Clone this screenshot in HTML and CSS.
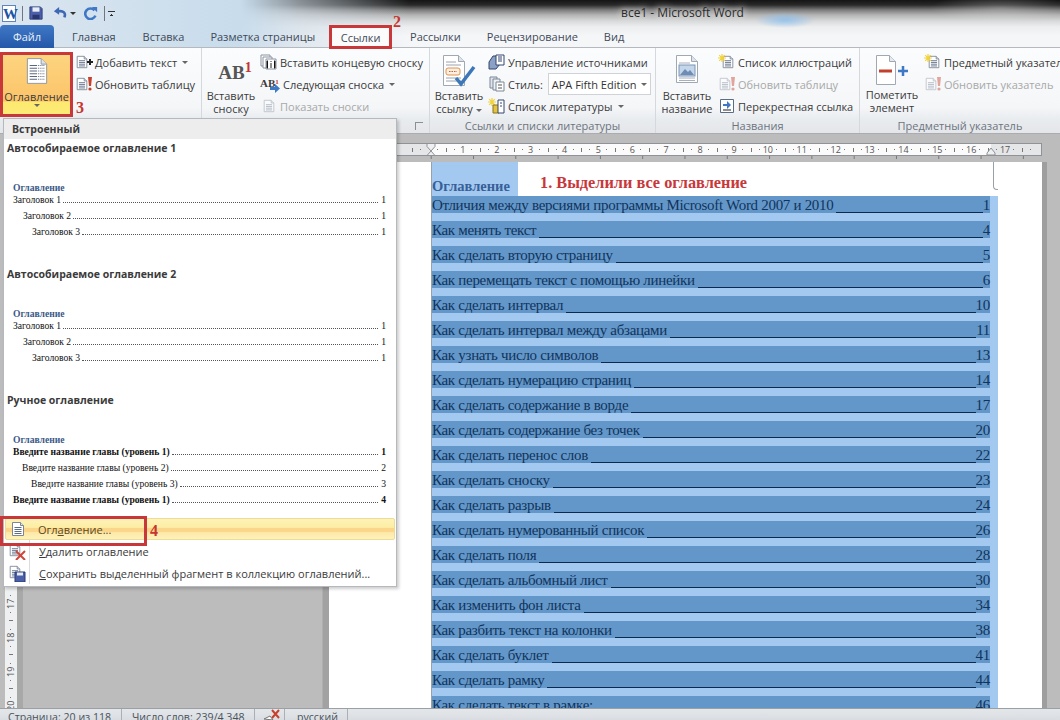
FILE: index.html
```html
<!DOCTYPE html>
<html lang="ru">

<head>
    <meta charset="UTF-8">
    <meta name="viewport" content="width=device-width, initial-scale=1.0">
    <title>все1 - Microsoft Word</title>
    <link rel="stylesheet" href="styles.css">
</head>

<body>
    <!-- shared icons -->
    <svg class="icon-defs" width="0" height="0">
        <defs>
            <symbol id="i-doc" viewBox="0 0 16 16">
                <path d="M2.500 1.500h8l3 3v10h-11z" fill="#fff" stroke="#7d8794"/>
                <path d="M10.500 1.500v3h3" fill="#dfe5ec" stroke="#7d8794"/>
                <path d="M4.500 6.500h7M4.500 8.500h7M4.500 10.500h7M4.500 12.500h7" stroke="#5b6c85"/>
            </symbol>
            <symbol id="i-spark" viewBox="0 0 8 8">
                <path d="M4 0v8M0 4h8M1.200 1.200l5.600 5.600M6.800 1.200L1.200 6.800" stroke="#f2d33c" stroke-width="1.200"/>
            </symbol>
            <symbol id="i-bang" viewBox="0 0 6 14">
                <path d="M1 0h4L4 9H2z" fill="#c8402c"/>
                <circle cx="3" cy="12" r="1.600" fill="#c8402c"/>
            </symbol>
        </defs>
    </svg>

    <div class="window">
        <div class="chrome">
            <div class="titlebar">
                <div class="quick">
                    <span class="word-logo">W</span>
                    <span class="quick-sep"></span>
                    <svg class="qa" viewBox="0 0 16 16">
                        <path d="M1 1h12l2 2v12H1z" fill="#4a5fa8" stroke="#2b3a78"/>
                        <path d="M4 1.500h8v5H4z" fill="#e8ecf5"/>
                        <path d="M4 10h8v5H4z" fill="#28356f"/>
                    </svg>
                    <svg class="qa undo" viewBox="0 0 16 16">
                        <path d="M13 13c2-5-1-8-7-7" fill="none" stroke="#3f68b4" stroke-width="3"/>
                        <path d="M7 1L1 6l6 4z" fill="#3f68b4"/>
                    </svg>
                    <span class="qa-arrow"></span>
                    <svg class="qa redo" viewBox="0 0 16 16">
                        <path d="M12 5a6 6 0 1 0 1 6" fill="none" stroke="#3f78c4" stroke-width="3"/>
                        <path d="M9 1h6v6z" fill="#3f78c4"/>
                    </svg>
                    <span class="quick-sep"></span>
                    <span class="qa-more"></span>
                </div>
                <div class="doc-title">все1 - Microsoft Word</div>
            </div>
            <nav class="tabs">
                <span class="tab tab-file">Файл</span>
                <span class="tab tab-home">Главная</span>
                <span class="tab tab-insert">Вставка</span>
                <span class="tab tab-layout">Разметка страницы</span>
                <span class="tab tab-refs">Ссылки<b class="mark mark-2">2</b></span>
                <span class="tab tab-mail">Рассылки</span>
                <span class="tab tab-review">Рецензирование</span>
                <span class="tab tab-view">Вид</span>
            </nav>
        </div>

        <div class="ribbon">
            <section class="group group-toc">
                <div class="group-body">
                    <div class="big-btn toc-btn">
                        <svg class="big-icon" viewBox="0 0 24 30">
                            <path d="M1.500 1.500h15l6 6v21h-21z" fill="#fff" stroke="#8a93a0"/>
                            <path d="M16.500 1.500v6h6" fill="#dde3ea" stroke="#8a93a0"/>
                            <path d="M4 9h16M4 12h16M4 15h16M4 18h16M4 21h16M4 24h16" stroke="#4a5a72" stroke-dasharray="8 1 1 1 1 1 1 1"/>
                        </svg>
                        <span>Оглавление</span>
                        <i class="caret"></i>
                        <b class="mark mark-3">3</b>
                    </div>
                    <div class="small-col col-toc">
                        <div class="small-btn">
                            <svg class="ico" viewBox="0 0 18 16">
                                <use href="#i-doc" width="14" height="16"/>
                                <path d="M12 8h6M15 5v6" stroke="#222" stroke-width="2"/>
                            </svg>
                            Добавить текст <i class="caret"></i>
                        </div>
                        <div class="small-btn">
                            <svg class="ico" viewBox="0 0 18 16">
                                <use href="#i-doc" width="14" height="16"/>
                                <use href="#i-bang" x="12" y="1" width="6" height="14"/>
                            </svg>
                            Обновить таблицу
                        </div>
                    </div>
                </div>
                <div class="group-label"></div>
            </section>

            <section class="group group-notes">
                <div class="group-body">
                    <div class="big-btn note-btn">
                        <span class="ab-icon">AB<sup>1</sup></span>
                        <span>Вставить<br>сноску</span>
                    </div>
                    <div class="small-col col-notes">
                        <div class="small-btn">
                            <svg class="ico" viewBox="0 0 18 16">
                                <path d="M1 1h9v11H1z" fill="#fff" stroke="#8a93a0"/>
                                <path d="M3 3h9v11H3z" fill="#fff" stroke="#8a93a0"/>
                                <path d="M6 5h10v10H6z" fill="#fff" stroke="#8a93a0"/>
                                <path d="M8 7H7v7h1M14 7h1v7h-1M11 7v1M11 9v5" stroke="#222"/>
                            </svg>
                            Вставить концевую сноску
                        </div>
                        <div class="small-btn">
                            <span class="ab-small">AB<sup>1</sup></span>
                            <svg class="ab-arrow" viewBox="0 0 10 9">
                                <path d="M0 3h5V0l5 4.500L5 9V6H0z" fill="#3f78c4"/>
                            </svg>
                            Следующая сноска <i class="caret"></i>
                        </div>
                        <div class="small-btn off">
                            <svg class="ico faded" viewBox="0 0 18 16">
                                <use href="#i-doc" x="2" width="14" height="16"/>
                            </svg>
                            Показать сноски
                        </div>
                    </div>
                </div>
                <div class="group-label"><i class="launcher"></i></div>
            </section>

            <section class="group group-cite">
                <div class="group-body">
                    <div class="big-btn cite-btn">
                        <svg class="big-icon cite-icon" viewBox="0 0 34 34">
                            <path d="M1.500 1.500h15l6 6v24h-21z" fill="#fff" stroke="#a0a8b4"/>
                            <path d="M16.500 1.500v6h6" fill="#dde3ea" stroke="#a0a8b4"/>
                            <path d="M4 8h10M4 11h15M4 24h15M4 27h15" stroke="#9aa4b2"/>
                            <rect x="4" y="14" width="14" height="7" rx="2" fill="#fbeee2" stroke="#e0924a"/>
                            <path d="M7 17.500h8" stroke="#c8602c" stroke-dasharray="1.500 1"/>
                            <path d="M14 24l5 6L32 13" fill="none" stroke="#3c78b8" stroke-width="3.500"/>
                        </svg>
                        <span>Вставить<br>ссылку <i class="caret"></i></span>
                    </div>
                    <div class="small-col col-cite">
                        <div class="small-btn">
                            <svg class="ico" viewBox="0 0 18 16">
                                <path d="M1 8l4-6h7v8l-4 5H1z" fill="#8aa0c4" stroke="#34466e"/>
                                <path d="M8 1h8v10h-8z" fill="#fff" stroke="#34466e"/>
                                <path d="M10 3h4M10 5h4M10 7h4" stroke="#34466e"/>
                            </svg>
                            Управление источниками
                        </div>
                        <div class="small-btn style-row">
                            <svg class="ico" viewBox="0 0 18 16">
                                <path d="M2 1h7v11H2z" fill="#dfe5ee" stroke="#7d8794"/>
                                <path d="M5 3h7v11H5z" fill="#eef1f5" stroke="#7d8794"/>
                                <path d="M8 6h8v9H8z" fill="#fff" stroke="#7d8794"/>
                                <path d="M10 9h4M10 12h4" stroke="#555"/>
                            </svg>
                            Стиль:
                            <span class="style-select">APA Fifth Edition <i class="caret"></i></span>
                        </div>
                        <div class="small-btn">
                            <svg class="ico" viewBox="0 0 18 16">
                                <use href="#i-spark" width="8" height="8"/>
                                <path d="M5 7h6v8H5z" fill="#e6c33a" stroke="#8a7420"/>
                                <path d="M10 2h6v13h-6z" fill="#fff" stroke="#34466e"/>
                                <path d="M12 5h2M12 8h2" stroke="#34466e"/>
                            </svg>
                            Список литературы <i class="caret"></i>
                        </div>
                    </div>
                </div>
                <div class="group-label">Ссылки и списки литературы</div>
            </section>

            <section class="group group-captions">
                <div class="group-body">
                    <div class="big-btn caption-btn">
                        <svg class="big-icon" viewBox="0 0 24 30">
                            <path d="M1.500 1.500h15l6 6v21h-21z" fill="#fff" stroke="#a0a8b4"/>
                            <path d="M16.500 1.500v6h6" fill="#dde3ea" stroke="#a0a8b4"/>
                            <path d="M4 9h11M4 24h16M4 26.500h16" stroke="#a8b0bc"/>
                            <rect x="4" y="11" width="16" height="11" fill="#c4d6ea" stroke="#7d94b4"/>
                            <path d="M5 21l5-6 3 3 2-2 4 5z" fill="#6e8cb4"/>
                        </svg>
                        <span>Вставить<br>название</span>
                    </div>
                    <div class="small-col col-captions">
                        <div class="small-btn">
                            <svg class="ico" viewBox="0 0 18 16">
                                <use href="#i-doc" x="3" width="14" height="16"/>
                                <use href="#i-spark" width="8" height="8"/>
                            </svg>
                            Список иллюстраций
                        </div>
                        <div class="small-btn off">
                            <svg class="ico faded" viewBox="0 0 18 16">
                                <use href="#i-doc" width="14" height="16"/>
                                <use href="#i-bang" x="12" y="1" width="6" height="14"/>
                            </svg>
                            Обновить таблицу
                        </div>
                        <div class="small-btn">
                            <svg class="ico" viewBox="0 0 18 16">
                                <path d="M2.500 1.500h13v13h-13z" fill="#fff" stroke="#5b6c85"/>
                                <path d="M5 6h4V3l4 4-4 4V8H5z" fill="#3f78c4"/>
                                <path d="M5 12h8" stroke="#222"/>
                            </svg>
                            Перекрестная ссылка
                        </div>
                    </div>
                </div>
                <div class="group-label">Названия</div>
            </section>

            <section class="group group-index">
                <div class="group-body">
                    <div class="big-btn mark-btn">
                        <svg class="big-icon mark-icon" viewBox="0 0 34 32">
                            <path d="M1.500 1.500h13l6 6v23h-19z" fill="#fff" stroke="#a0a8b4"/>
                            <path d="M14.500 1.500v6h6" fill="#e6eaef" stroke="#a0a8b4"/>
                            <path d="M4 17h13" stroke="#c2412c" stroke-width="3"/>
                            <path d="M23 17h10M28 12v10" stroke="#3f78c4" stroke-width="2.500"/>
                        </svg>
                        <span>Пометить<br>элемент</span>
                    </div>
                    <div class="small-col col-index">
                        <div class="small-btn">
                            <svg class="ico" viewBox="0 0 18 16">
                                <use href="#i-doc" x="3" width="14" height="16"/>
                                <use href="#i-spark" width="8" height="8"/>
                            </svg>
                            Предметный указатель
                        </div>
                        <div class="small-btn off">
                            <svg class="ico faded" viewBox="0 0 18 16">
                                <use href="#i-doc" width="14" height="16"/>
                                <use href="#i-bang" x="12" y="1" width="6" height="14"/>
                            </svg>
                            Обновить указатель
                        </div>
                    </div>
                </div>
                <div class="group-label">Предметный указатель</div>
            </section>
        </div>

        <div class="workspace">
            <div class="side-ruler">
                <div class="v-ruler">
                    <span>17</span>
                    <span>18</span>
                    <span>19</span>
                    <span>20</span>
                </div>
            </div>
            <div class="sheet-area">
                <div class="top-ruler">
                    <span></span>
                    <span>1</span><span>2</span><span>3</span><span>4</span><span>5</span><span>6</span>
                    <span>7</span><span>8</span><span>9</span><span>10</span><span>11</span><span>12</span>
                    <span>13</span><span>14</span><span>15</span><span>16</span><span>17</span><span></span>
                    <svg class="indent indent-left" viewBox="0 0 10 18">
                        <path d="M1 .500h8v3L5 8 1 3.500zM5 8l4 4.500v5H1v-5z" fill="#eef0f2" stroke="#8f9296"/>
                    </svg>
                    <svg class="indent indent-right" viewBox="0 0 10 18">
                        <path d="M5 5l4 5v2H1v-2z" fill="#eef0f2" stroke="#8f9296"/>
                    </svg>
                </div>
                <div class="tab-ticks"></div>
                <div class="page">
                    <i class="margin-mark"></i>
                    <div class="page-head">
                        <span class="toc-title">Оглавление</span>
                        <span class="note">1. Выделили все оглавление</span>
                    </div>
                    <div class="toc-list">
                        <div class="toc-row"><span>Отличия между версиями программы Microsoft Word 2007 и 2010</span><i></i><span>1</span></div>
                        <div class="toc-row"><span>Как менять текст</span><i></i><span>4</span></div>
                        <div class="toc-row"><span>Как сделать вторую страницу</span><i></i><span>5</span></div>
                        <div class="toc-row"><span>Как перемещать текст с помощью линейки</span><i></i><span>6</span></div>
                        <div class="toc-row"><span>Как сделать интервал</span><i></i><span>10</span></div>
                        <div class="toc-row"><span>Как сделать интервал между абзацами</span><i></i><span>11</span></div>
                        <div class="toc-row"><span>Как узнать число символов</span><i></i><span>13</span></div>
                        <div class="toc-row"><span>Как сделать нумерацию страниц</span><i></i><span>14</span></div>
                        <div class="toc-row"><span>Как сделать содержание в ворде</span><i></i><span>17</span></div>
                        <div class="toc-row"><span>Как сделать содержание без точек</span><i></i><span>20</span></div>
                        <div class="toc-row"><span>Как сделать перенос слов</span><i></i><span>22</span></div>
                        <div class="toc-row"><span>Как сделать сноску</span><i></i><span>23</span></div>
                        <div class="toc-row"><span>Как сделать разрыв</span><i></i><span>24</span></div>
                        <div class="toc-row"><span>Как сделать нумерованный список</span><i></i><span>26</span></div>
                        <div class="toc-row"><span>Как сделать поля</span><i></i><span>28</span></div>
                        <div class="toc-row"><span>Как сделать альбомный лист</span><i></i><span>30</span></div>
                        <div class="toc-row"><span>Как изменить фон листа</span><i></i><span>34</span></div>
                        <div class="toc-row"><span>Как разбить текст на колонки</span><i></i><span>38</span></div>
                        <div class="toc-row"><span>Как сделать буклет</span><i></i><span>41</span></div>
                        <div class="toc-row"><span>Как сделать рамку</span><i></i><span>44</span></div>
                        <div class="toc-row"><span>Как сделать текст в рамке:</span><i></i><span>46</span></div>
                    </div>
                </div>
            </div>
        </div>

        <footer class="statusbar">
            <span class="status-item st-page">Страница: 20 из 118</span>
            <span class="status-item st-words">Число слов: 239/4 348</span>
            <span class="status-item st-proof">
                <svg class="proof" viewBox="0 0 18 12">
                    <path d="M1 10l6-3 3 4z" fill="#fff" stroke="#777"/>
                    <path d="M9 1l7 8M16 1L9 9" stroke="#c8402c" stroke-width="2"/>
                </svg>
            </span>
            <span class="status-item st-lang">русский</span>
        </footer>

        <!-- table of contents dropdown -->
        <div class="toc-menu">
            <div class="menu-band">Встроенный</div>
            <div class="gallery">
                <h4>Автособираемое оглавление 1</h4>
                <div class="preview">
                    <div class="pv-title">Оглавление</div>
                    <div class="pv-row"><span>Заголовок 1</span><i></i><span>1</span></div>
                    <div class="pv-row lv2"><span>Заголовок 2</span><i></i><span>1</span></div>
                    <div class="pv-row lv3"><span>Заголовок 3</span><i></i><span>1</span></div>
                </div>
                <h4>Автособираемое оглавление 2</h4>
                <div class="preview">
                    <div class="pv-title">Оглавление</div>
                    <div class="pv-row"><span>Заголовок 1</span><i></i><span>1</span></div>
                    <div class="pv-row lv2"><span>Заголовок 2</span><i></i><span>1</span></div>
                    <div class="pv-row lv3"><span>Заголовок 3</span><i></i><span>1</span></div>
                </div>
                <h4>Ручное оглавление</h4>
                <div class="preview">
                    <div class="pv-title">Оглавление</div>
                    <div class="pv-row strong"><span>Введите название главы (уровень 1)</span><i></i><span>1</span></div>
                    <div class="pv-row lv2b"><span>Введите название главы (уровень 2)</span><i></i><span>2</span></div>
                    <div class="pv-row lv3b"><span>Введите название главы (уровень 3)</span><i></i><span>3</span></div>
                    <div class="pv-row strong"><span>Введите название главы (уровень 1)</span><i></i><span>4</span></div>
                </div>
            </div>
            <div class="menu-item active">
                <svg class="menu-ico" viewBox="0 0 18 18"><use href="#i-doc" x="1" width="16" height="18"/></svg>
                <span>Огл<u>а</u>вление...</span>
                <b class="mark mark-4">4</b>
            </div>
            <div class="menu-item">
                <svg class="menu-ico" viewBox="0 0 18 18">
                    <use href="#i-doc" width="14" height="16"/>
                    <path d="M8 9l9 9M17 9l-9 9" stroke="#d0453a" stroke-width="2"/>
                </svg>
                <span><u>У</u>далить оглавление</span>
            </div>
            <div class="menu-item">
                <svg class="menu-ico" viewBox="0 0 18 18">
                    <use href="#i-doc" width="14" height="16"/>
                    <path d="M7 8h10v10H7z" fill="#4a5fa8" stroke="#2b3a78"/>
                    <path d="M9 8.500h6v3H9z" fill="#e8ecf5"/>
                </svg>
                <span><u>С</u>охранить выделенный фрагмент в коллекцию оглавлений...</span>
            </div>
        </div>
        <div class="red-box box-4"></div>
    </div>
</body>

</html>
```

FILE: styles.css
```css
* {
    margin: 0;
    padding: 0;
    box-sizing: border-box;
}

body {
    font-family: "Open Sans", "Noto Sans", sans-serif;
    font-size: 11px;
    color: #3b3b3b;
    background-color: #bcbcbc;
}

.icon-defs {
    position: absolute;
}

.window {
    position: relative;
    display: flex;
    flex-direction: column;
    width: 1060px;
    height: 720px;
    overflow: hidden;
}

/* title bar + tabs share one blurry glass background */
.chrome {
    height: 48px;
    background:
        radial-gradient(ellipse 30px 8px at 785px 20px, rgba(135, 190, 240, 0.8), transparent),
        radial-gradient(ellipse 70px 14px at 1000px 8px, rgba(255, 255, 255, 0.25), transparent),
        linear-gradient(to right, #dbe6ef 0, #c8dcec 240px, rgba(210, 222, 232, 0.6) 300px, transparent 410px),
        linear-gradient(to bottom, #141414 0, #2a2a2a 5px, #7d7d7d 10px, #b4b4b4 15px, #d8d9da 21px, #eceef0 27px, #f5f6f8 36px, #f4f6f8 48px);
    border-bottom: 1px solid #b5b9be;
}

.titlebar {
    position: relative;
    display: flex;
    align-items: center;
    height: 25px;
}

.quick {
    display: flex;
    align-items: center;
    gap: 5px;
    padding: 1px 0 0 2px;
}

.word-logo {
    display: block;
    width: 14px;
    height: 17px;
    font-family: "Liberation Serif", serif;
    font-weight: bold;
    font-size: 15px;
    line-height: 17px;
    text-align: center;
    color: #1d55a5;
    background-color: #fff;
    border: 1px solid #5f86ba;
}

.quick-sep {
    width: 1px;
    height: 15px;
    margin: 0 1px;
    background-color: #6f7680;
}

.qa {
    width: 14px;
    height: 14px;
}

.undo {
    margin-left: 5px;
}

.qa-arrow {
    width: 0;
    height: 0;
    margin-left: -2px;
    border: 3px solid transparent;
    border-top: 3px solid #333;
    border-bottom: 0;
}

.redo {
    margin-left: 3px;
}

.qa-more {
    width: 7px;
    height: 5px;
    margin-left: -3px;
    border-top: 1px solid #333;
    background: linear-gradient(135deg, transparent 49%, #333 50%, #333 100%) 0 2px / 4px 3px no-repeat,
        linear-gradient(225deg, transparent 49%, #333 50%, #333 100%) 3px 2px / 4px 3px no-repeat;
}

.doc-title {
    position: absolute;
    left: 621px;
    top: 4px;
    font-size: 12px;
    color: #2b2b2b;
    text-shadow: 0 0 6px #eee, 0 0 10px #ddd;
}

.tabs {
    display: flex;
    height: 23px;
    font-size: 11px;
}

.tab {
    position: relative;
    display: block;
    line-height: 23px;
    color: #3f4a58;
    white-space: nowrap;
}

.tab-file {
    width: 54px;
    text-align: center;
    color: #e9f0f8;
    background: linear-gradient(#3f78c6, #2458a8);
    border-radius: 4px 4px 0 0;
}

.tab-home {
    margin-left: 18px;
}

.tab-insert {
    margin-left: 27px;
}

.tab-layout {
    margin-left: 26px;
}

/* annotated tab */
.tab-refs {
    width: 63px;
    height: 24px;
    margin-left: 14px;
    line-height: 20px;
    text-align: center;
    border: 3px solid #c8373a;
    background-color: #fbfbfb;
}

.tab-mail {
    margin-left: 18px;
}

.tab-review {
    margin-left: 26px;
}

.tab-view {
    margin-left: 26px;
}

.mark {
    position: absolute;
    font-family: "Liberation Serif", serif;
    font-weight: bold;
    color: #c7352f;
    font-size: 16px;
    line-height: 16px;
}

.mark-2 {
    left: 61px;
    top: -14px;
}

.mark-3 {
    left: 73px;
    top: 45px;
}

.mark-4 {
    left: 144px;
    top: 4px;
}

.ribbon {
    display: flex;
    height: 86px;
    background: linear-gradient(to bottom, #fbfcfd 0, #f4f6f8 70%, #e9ecef 84%, #e4e6e9 100%);
    border-bottom: 1px solid #a9adb2;
}

.group {
    display: flex;
    flex-direction: column;
    height: 85px;
    border-right: 1px solid #d5d9de;
}

.group-toc {
    width: 202px;
}

.group-notes {
    width: 228px;
}

.group-cite {
    width: 226px;
}

.group-captions {
    width: 204px;
}

.group-index {
    flex: 1;
    min-width: 0;
    border-right: 0;
}

.group-body {
    display: flex;
    height: 70px;
}

.group-label {
    position: relative;
    height: 15px;
    text-align: center;
    line-height: 15px;
    color: #6c7480;
}

.launcher {
    position: absolute;
    right: 6px;
    top: 4px;
    width: 8px;
    height: 8px;
    border-left: 1px solid #8a8f96;
    border-top: 1px solid #8a8f96;
}

.big-btn {
    position: relative;
    flex: none;
    display: flex;
    flex-direction: column;
    align-items: center;
    text-align: center;
    line-height: 13px;
    white-space: nowrap;
}

.big-icon {
    width: 24px;
    height: 30px;
    margin-bottom: 5px;
    flex: none;
}

/* annotated button */
.toc-btn {
    width: 73px;
    height: 65px;
    margin-top: 4px;
    padding-top: 2px;
    border: 3px solid #c8373a;
    background: linear-gradient(to bottom, #fdd47f 0, #fbc469 78%, #fde96f 80%, #fdeb78 100%);
}

.toc-btn .big-icon {
    width: 22px;
    height: 28px;
}

.toc-btn .caret {
    margin-top: 1px;
}

.note-btn {
    width: 58px;
    padding-top: 5px;
}

.ab-icon {
    height: 36px;
    padding: 10px 0 0 8px;
    font-family: "Liberation Serif", serif;
    font-weight: bold;
    font-size: 19px;
    line-height: 20px;
    color: #555;
}

.ab-icon sup {
    font-size: 14px;
    line-height: 0;
    color: #c7352f;
    vertical-align: 7px;
}

.cite-btn {
    width: 58px;
    padding-top: 6px;
}

.cite-icon {
    width: 34px;
    height: 34px;
    margin-bottom: 1px;
}

.caption-btn {
    width: 62px;
    padding-top: 6px;
}

.mark-btn {
    width: 64px;
    padding-top: 6px;
}

.mark-icon {
    width: 34px;
    height: 32px;
    margin-bottom: 2px;
}

.small-col {
    display: flex;
    flex-direction: column;
    padding-top: 3px;
}

.col-toc {
    margin-left: 2px;
}

.small-btn {
    display: flex;
    align-items: center;
    gap: 2px;
    height: 22px;
    white-space: nowrap;
}

.small-btn.off {
    color: #a8a8a8;
}

.small-btn .caret {
    margin-left: 3px;
}

.ico {
    width: 18px;
    height: 16px;
    flex: none;
}

.faded {
    opacity: 0.45;
}

.ab-small {
    width: 15px;
    margin-top: -3px;
    font-family: "Liberation Serif", serif;
    font-weight: bold;
    font-size: 11px;
    color: #3b3b3b;
}

.ab-small sup {
    font-size: 7px;
    line-height: 0;
    vertical-align: 3px;
    color: #c7352f;
}

.ab-arrow {
    width: 10px;
    height: 9px;
    margin: 9px 1px 0 -7px;
}

.style-select {
    display: flex;
    align-items: center;
    justify-content: space-between;
    width: 103px;
    height: 22px;
    margin-left: 3px;
    padding: 0 3px;
    color: #333;
    background-color: #fff;
    border: 1px solid #cfd3d8;
}

.caret {
    display: inline-block;
    width: 0;
    height: 0;
    border: 3px solid transparent;
    border-top: 3px solid #666;
    border-bottom: 0;
    vertical-align: middle;
}

.workspace {
    display: flex;
    flex: 1;
    min-height: 0;
    background-color: #bcbcbc;
}

.side-ruler {
    display: flex;
    width: 329px;
    padding-left: 5px;
    background: linear-gradient(to right, #bcbcbc 0, #bcbcbc 322px, #a2a2a2 323px, #a2a2a2 100%);
}

.v-ruler {
    display: flex;
    flex-direction: column;
    justify-content: flex-end;
    width: 18px;
    height: 100%;
    padding-right: 6px;
    overflow: hidden;
    background: linear-gradient(to right, #eef0f2 0, #eef0f2 12px, #a8a8a8 12px);
    font-size: 9px;
    color: #555;
}

.v-ruler span {
    flex: none;
    height: 34px;
    writing-mode: vertical-rl;
    transform: rotate(180deg);
    text-align: center;
    line-height: 12px;
    background:
        linear-gradient(#777, #777) center 8px / 1px 1px no-repeat,
        linear-gradient(#777, #777) center 25px / 1px 1px no-repeat,
        linear-gradient(#777, #777) center 0 / 4px 1px no-repeat;
}

.v-ruler span:last-child {
    margin-bottom: -15px;
}

.sheet-area {
    flex: 1;
    min-width: 0;
    display: flex;
    flex-direction: column;
}

.top-ruler {
    position: relative;
    display: flex;
    flex: none;
    width: 713px;
    height: 13px;
    margin-top: 9px;
    padding-left: 82px;
    overflow: hidden;
    font-size: 9px;
    line-height: 11px;
    color: #555;
    text-align: center;
    background: linear-gradient(to right, #e4e6e8 0, #e4e6e8 101px, #fbfbfb 101px, #fbfbfb 661px, #e4e6e8 661px);
    border: 1px solid #8f9296;
}

.top-ruler span {
    width: 33.9px;
    flex: none;
    background:
        linear-gradient(#777, #777) 8px center / 1px 1px no-repeat,
        linear-gradient(#777, #777) 25px center / 1px 1px no-repeat,
        linear-gradient(#777, #777) 0 center / 1px 4px no-repeat;
}

.indent {
    position: absolute;
    top: -1px;
    width: 10px;
    height: 18px;
}

.indent-left {
    left: 96px;
}

.indent-right {
    left: 656px;
}

.tab-ticks {
    flex: none;
    height: 6px;
    background: linear-gradient(to right, #777 1px, transparent 1px) 144px 0 / 42.3px 3px repeat-x;
}

.page {
    position: relative;
    flex: 1;
    min-height: 0;
    overflow: hidden;
    width: 713px;
    padding-left: 103px;
    background-color: #fff;
    box-shadow: 5px 0 0 #9e9e9e;
    font-family: "Liberation Serif", serif;
}

/* text boundary corner near the top right */
.margin-mark {
    position: absolute;
    left: 664px;
    top: 0;
    width: 5px;
    height: 28px;
    border-left: 1px solid #9aa0a8;
    border-bottom: 1px solid #9aa0a8;
    border-bottom-left-radius: 4px;
}

.page-head {
    display: flex;
    height: 34px;
    align-items: flex-end;
}

.toc-title {
    width: 86px;
    height: 34px;
    padding-top: 16px;
    font-weight: bold;
    font-size: 14.5px;
    color: #375f98;
    background-color: #a3c9f0;
    box-shadow: -1px 0 0 #9aa0a8;
}

.note {
    margin: 0 0 3px 22px;
    font-weight: bold;
    font-size: 16.3px;
    color: #c8373a;
}

.toc-list {
    width: 566px;
    padding-right: 8px;
    background-color: #a3c9f0;
    box-shadow: -1px 0 0 #9aa0a8;
}

.toc-row {
    display: flex;
    align-items: flex-start;
    height: 17px;
    margin-bottom: 8px;
    font-size: 15px;
    letter-spacing: -0.3px;
    line-height: 19px;
    color: #10345c;
    background-color: #6497c9;
}

.toc-row span {
    white-space: nowrap;
}

.toc-row i {
    flex: 1;
    align-self: stretch;
    margin-left: 3px;
    border-bottom: 1px solid #0a2a50;
}

.statusbar {
    display: flex;
    height: 12px;
    overflow: hidden;
    font-size: 10.6px;
    line-height: 17px;
    color: #49525c;
    background: linear-gradient(to bottom, #e4e7ea, #d9dde1);
    border-top: 1px solid #9aa0a6;
}

.status-item {
    display: block;
    padding-left: 8px;
    border-right: 1px solid #aab0b6;
    white-space: nowrap;
}

.st-page {
    width: 122px;
}

.st-words {
    width: 133px;
    padding-left: 10px;
}

.st-proof {
    width: 30px;
}

.st-lang {
    width: 63px;
    padding-left: 12px;
}

.proof {
    display: block;
    width: 18px;
    height: 12px;
}

/* dropdown over the ribbon and the document */
.toc-menu {
    position: absolute;
    left: 3px;
    top: 118px;
    display: flex;
    flex-direction: column;
    width: 394px;
    height: 469px;
    background-color: #fff;
    border: 1px solid #b5b8bc;
    box-shadow: 2px 2px 3px rgba(0, 0, 0, 0.2);
}

.menu-band {
    height: 20px;
    padding-left: 8px;
    font-size: 10.5px;
    font-weight: bold;
    line-height: 21px;
    color: #3b3b3b;
    background-color: #ededed;
}

.gallery {
    height: 379px;
    padding: 0 10px 0 3px;
}

.gallery h4 {
    height: 18px;
    font-size: 10.5px;
    font-weight: bold;
    line-height: 18px;
    color: #3b3b3b;
}

.preview {
    height: 108px;
    padding: 24px 0 0 6px;
    font-family: "Liberation Serif", serif;
    font-size: 9.6px;
    line-height: 16px;
    color: #111;
}

.pv-title {
    height: 11px;
    line-height: 13px;
    font-weight: bold;
    color: #3b5a88;
}

.pv-row {
    display: flex;
    align-items: flex-end;
    height: 16px;
}

.pv-row i {
    flex: 1;
    margin: 0 3px 5px 2px;
    border-bottom: 1px dotted #555;
}

.lv2 {
    padding-left: 10px;
}

.lv3 {
    padding-left: 19px;
}

.lv2b {
    padding-left: 9px;
}

.lv3b {
    padding-left: 18px;
}

.strong {
    font-weight: bold;
}

.menu-item {
    position: relative;
    display: flex;
    align-items: center;
    height: 22px;
    padding-left: 4px;
    color: #3b3b3b;
    background: linear-gradient(to right, transparent 25px, #d9dce0 25px, #d9dce0 26px, transparent 26px);
}

.menu-ico {
    width: 18px;
    height: 18px;
    margin-right: 13px;
    flex: none;
}

.menu-item.active {
    margin: 0 1px;
    padding-left: 3px;
    color: #5a4a20;
    background: linear-gradient(to bottom, #fdf3b8 0, #fdeea4 42%, #fbd58a 46%, #fbd58a 62%, #fde9a8 68%, #fdf2bc 100%);
    border: 1px solid #ecdc96;
    border-radius: 2px;
}

.menu-item.active .menu-ico {
    margin-right: 11px;
}

.red-box {
    position: absolute;
    border: 3px solid #c8373a;
}

.box-4 {
    left: 0;
    top: 516px;
    width: 147px;
    height: 30px;
}
```
